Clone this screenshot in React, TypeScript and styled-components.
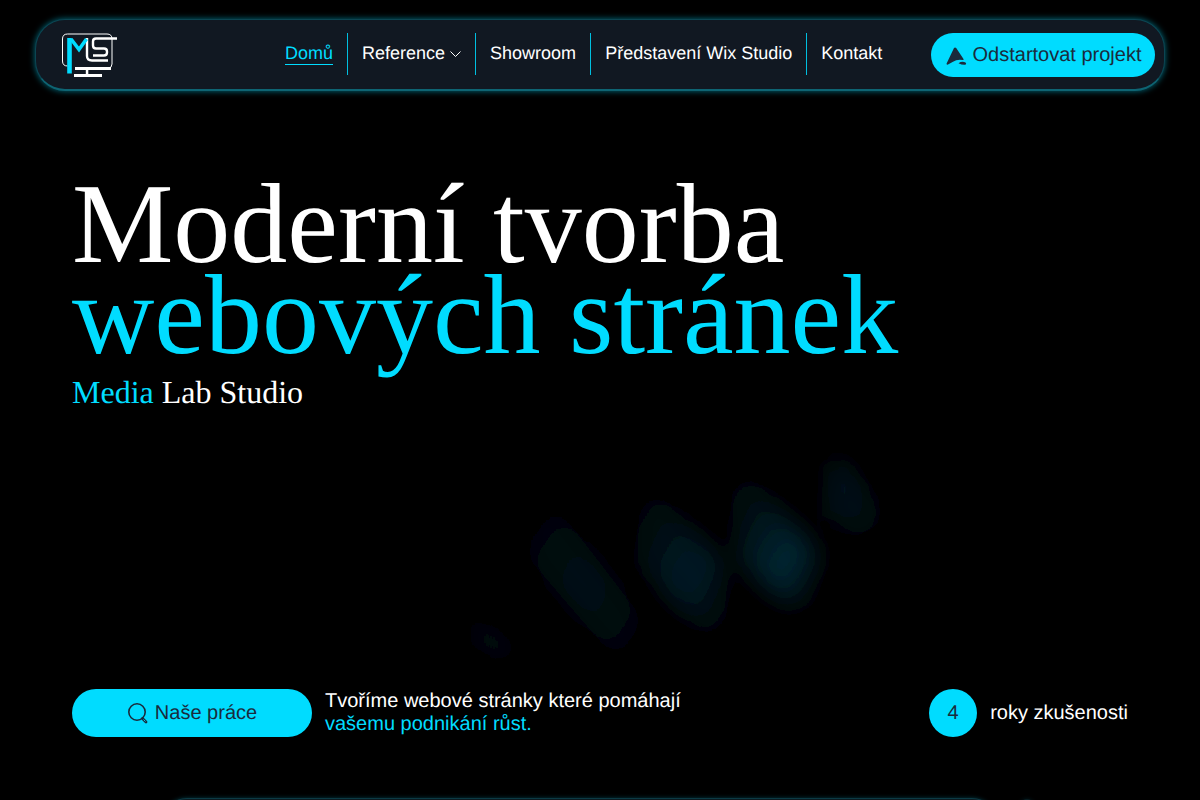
import { createGlobalStyle, styled } from "styled-components";

const cyan = "#00dcff";
const ink = "#1a2b3c";

const GlobalStyle = createGlobalStyle`
  html, body {
    margin: 0;
    height: 100%;
    background: #000;
  }
  body {
    font-family: "Liberation Sans", Arial, sans-serif;
    color: #fff;
    overflow: hidden;
    text-rendering: geometricPrecision;
  }
`;

const Page = styled.div`
  position: relative;
  height: 800px;
  overflow: hidden;
  background: #000;
  padding: 19px 35px 0;
  box-sizing: border-box;
`;

const Header = styled.header`
  height: 72px;
  box-sizing: border-box;
  display: flex;
  align-items: center;
  padding: 0 9px 0 23px;
  background: #111822;
  border: 1px solid #0c4552;
  border-bottom: 2px solid #0e6473;
  border-radius: 30px;
  box-shadow: 0 0 6px rgba(0, 220, 255, 0.5);
`;

const LogoMark = styled.svg`
  width: 60px;
  height: 48px;
  flex: none;
  display: block;
`;

const Nav = styled.nav`
  display: flex;
  align-items: stretch;
  height: 42px;
  margin-left: 152px;
  margin-top: -2px;
`;

const NavItem = styled.a<{ $last?: boolean }>`
  display: flex;
  align-items: center;
  gap: 5px;
  padding: 0 14px;
  font-size: 18px;
  color: #fff;
  border-right: ${(p) => (p.$last ? "none" : "1px solid #00bfe0")};
`;

const ActiveLabel = styled.span`
  color: ${cyan};
  border-bottom: 1px solid ${cyan};
  line-height: 21px;
`;

const CtaButton = styled.a`
  margin-left: auto;
  width: 224px;
  height: 44px;
  box-sizing: border-box;
  display: flex;
  align-items: center;
  justify-content: center;
  gap: 6px;
  padding-top: 2px;
  border-radius: 22px;
  background: ${cyan};
  color: ${ink};
  font-size: 20px;
`;

const Hero = styled.section`
  position: relative;
  padding: 0 37px;
`;

const Title = styled.h1`
  margin: 87px 0 0;
  font-family: "Liberation Serif", "Times New Roman", serif;
  font-weight: 400;
  font-size: 114px;
  line-height: 0.8;
  color: #fff;
`;

const TitleAccent = styled.span`
  display: block;
  color: ${cyan};
`;

const Subtitle = styled.p`
  margin: 14px 0 0;
  font-family: "Liberation Serif", "Times New Roman", serif;
  font-size: 32px;
  line-height: 37px;
`;

const Accent = styled.span`
  color: ${cyan};
`;

const BottomRow = styled.div`
  display: flex;
  align-items: center;
  margin-top: 278px;
`;

const WorkButton = styled.a`
  width: 240px;
  height: 48px;
  display: flex;
  align-items: center;
  justify-content: center;
  gap: 6px;
  border-radius: 24px;
  background: ${cyan};
  color: ${ink};
  font-size: 20px;
`;

const Tagline = styled.p`
  margin: 0 0 0 13px;
  font-size: 20px;
  line-height: 23px;
`;

const Stat = styled.div`
  margin-left: auto;
  display: flex;
  align-items: center;
  gap: 13px;
  font-size: 20px;
`;

const StatBadge = styled.span`
  width: 48px;
  height: 48px;
  border-radius: 50%;
  display: flex;
  align-items: center;
  justify-content: center;
  background: ${cyan};
  color: ${ink};
`;

const Streaks = styled.svg`
  position: absolute;
  left: 440px;
  top: 430px;
  width: 480px;
  height: 250px;
  pointer-events: none;
`;

const NextPanel = styled.div`
  position: absolute;
  left: 163px;
  width: 833px;
  top: 798px;
  height: 40px;
  border-radius: 24px 24px 0 0;
  background: #0b1a20;
  border-top: 1px solid #0c3a44;
  box-shadow: 0 0 4px rgba(0, 220, 255, 0.25);
`;

const NextPanelTip = styled(NextPanel)`
  left: 1020px;
  width: 14px;
  top: 799px;
  border-radius: 8px 8px 0 0;
  opacity: 0.5;
`;

function Logo() {
  return (
    <LogoMark viewBox="0 0 60 48" aria-label="MLS">
      <g fill="none" stroke="#fff">
        <path
          d="M8.500 35Q3.500 35 3.500 30V8Q3.500 3 8.500 3H48Q53 3 53 8V33Q53 37 49 37.500"
          strokeWidth="1"
        />
        <path d="M28 7V25Q28 29.500 33 29.500H49" strokeWidth="2.400" />
        <path
          d="M58 7.500H37Q34 7.500 34 10.500V14.500Q34 17.500 37 17.500H45Q48 17.500 48 20.500V21.500Q48 24.500 45 24.500H34"
          strokeWidth="2.400"
        />
      </g>
      <g fill="#fff">
        <rect x="16" y="36" width="36" height="3" />
        <rect x="26.800" y="38" width="2.500" height="6" />
        <rect x="15" y="43" width="28" height="3" />
      </g>
      <path d="M10.500 42.500V7" fill="none" stroke={cyan} strokeWidth="4.600" />
      <path d="M12 8L20 18.500L27.500 8" fill="none" stroke={cyan} strokeWidth="3.600" />
    </LogoMark>
  );
}

function RocketIcon() {
  return (
    <svg width="22" height="20" viewBox="0 0 22 20" aria-hidden="true">
      <path
        d="M9 2Q10 0.800 11.200 2L18.500 13Q19 14.200 17.800 14Q12 13 8 15.800L3 18.500Q1.200 19 1.600 17.500Z"
        fill={ink}
      />
      <path d="M13.500 17.200Q17 14.800 20.500 16.500Q21.800 17.500 20.500 18.800Q17 19.200 13.500 17.200Z" fill={ink} />
    </svg>
  );
}

function SearchIcon() {
  return (
    <svg width="22" height="22" viewBox="0 0 22 22" aria-hidden="true">
      <circle cx="10" cy="10" r="8.200" fill="none" stroke={ink} strokeWidth="1.600" />
      <path d="M15.500 16.500L19 20" stroke={ink} strokeWidth="2.800" strokeLinecap="round" />
      <path d="M16.800 17.800L18.200 19.200" stroke={cyan} strokeWidth="0.900" strokeLinecap="round" />
    </svg>
  );
}

function Chevron() {
  return (
    <svg width="11" height="8" viewBox="0 0 11 8" aria-hidden="true">
      <path d="M0.500 1.500L5.500 6.500L10.500 1.500" fill="none" stroke="#fff" strokeWidth="1" />
    </svg>
  );
}

export default function App() {
  return (
    <Page>
      <GlobalStyle />
      <Streaks viewBox="0 0 480 250" aria-hidden="true">
        <defs>
          <filter id="streak-blur" x="-40%" y="-40%" width="180%" height="180%">
            <feGaussianBlur stdDeviation="12" />
          </filter>
          <linearGradient id="streak-dim" x1="0" y1="0" x2="1" y2="1">
            <stop offset="0" stopColor="#000" />
            <stop offset="0.5" stopColor="#001018" />
            <stop offset="1" stopColor="#000" />
          </linearGradient>
          <linearGradient id="streak-mid" x1="0" y1="0" x2="1" y2="1">
            <stop offset="0" stopColor="#000" />
            <stop offset="0.6" stopColor="#001c28" />
            <stop offset="1" stopColor="#000" />
          </linearGradient>
          <linearGradient id="streak-bright" x1="0" y1="0" x2="1" y2="1">
            <stop offset="0" stopColor="#000" />
            <stop offset="0.65" stopColor="#002633" />
            <stop offset="1" stopColor="#000" />
          </linearGradient>
          <linearGradient id="streak-tip" x1="0" y1="0" x2="1" y2="1">
            <stop offset="0.2" stopColor="#001a25" />
            <stop offset="1" stopColor="#000" />
          </linearGradient>
        </defs>
        <g filter="url(#streak-blur)">
          <path d="M85 85L115 75L200 185V240H185L90 130Z" fill="url(#streak-dim)" />
          <path d="M200 60L220 65L285 135V205H265L197 130Z" fill="url(#streak-mid)" />
          <path d="M290 45H310L380 125L365 175L350 178L298 130Z" fill="url(#streak-bright)" />
          <path d="M395 25L445 85L420 110L388 85Z" fill="url(#streak-tip)" />
          <path d="M32 185L70 215L65 232L40 215Z" fill="#000c14" />
        </g>
      </Streaks>
      <Header>
        <Logo />
        <Nav>
          <NavItem>
            <ActiveLabel>Domů</ActiveLabel>
          </NavItem>
          <NavItem>
            Reference <Chevron />
          </NavItem>
          <NavItem>Showroom</NavItem>
          <NavItem>Představení Wix Studio</NavItem>
          <NavItem $last>Kontakt</NavItem>
        </Nav>
        <CtaButton>
          <RocketIcon />
          Odstartovat projekt
        </CtaButton>
      </Header>
      <Hero>
        <Title>
          Moderní tvorba
          <TitleAccent>webových stránek</TitleAccent>
        </Title>
        <Subtitle>
          <Accent>Media</Accent> Lab Studio
        </Subtitle>
        <BottomRow>
          <WorkButton>
            <SearchIcon />
            Naše práce
          </WorkButton>
          <Tagline>
            Tvoříme webové stránky které pomáhají
            <br />
            <Accent>vašemu podnikání růst.</Accent>
          </Tagline>
          <Stat>
            <StatBadge>4</StatBadge>
            roky zkušenosti
          </Stat>
        </BottomRow>
      </Hero>
      <NextPanel />
      <NextPanelTip />
    </Page>
  );
}
